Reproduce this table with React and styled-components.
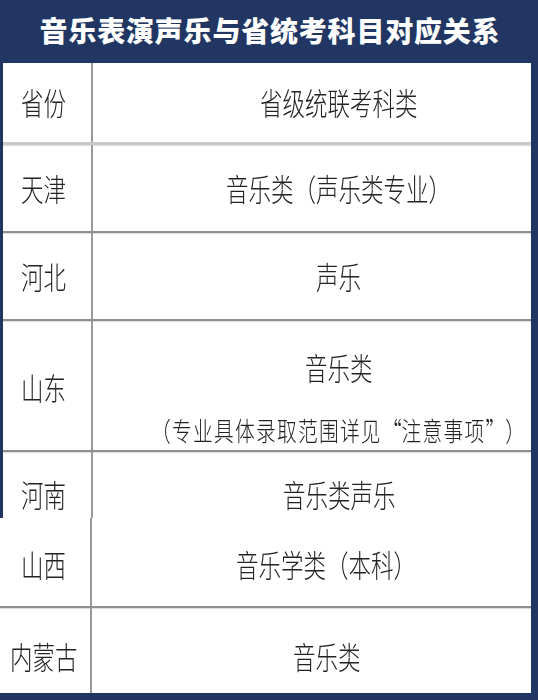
import React from "react";
import styled, { createGlobalStyle } from "styled-components";

const NAVY = "#213663";

const Global = createGlobalStyle`
  html, body { margin: 0; padding: 0; background: #fff; }
  body { font-family: "Noto Sans CJK SC", sans-serif; }
  * { box-sizing: border-box; }
`;

const Frame = styled.div`
  width: 538px;
  height: 700px;
  background: ${NAVY};
  display: flex;
  flex-direction: column;
  padding-bottom: 7px;
`;

const TitleBar = styled.div`
  height: 63px;
  display: flex;
  align-items: center;
  justify-content: center;
  padding-left: 2px;
  padding-bottom: 3px;
`;

const Title = styled.h1`
  margin: 0;
  color: #fff;
  font-family: "Noto Sans CJK SC", sans-serif;
  font-weight: 900;
  font-size: 28px;
  letter-spacing: 0.8px;
  line-height: 1;
`;

const Table = styled.div`
  background: #fff;
  margin-left: ${(p) => p.$inset}px;
  margin-right: 7px;
  display: flex;
  flex-direction: column;
`;

const Row = styled.div`
  display: grid;
  grid-template-columns: ${(p) => p.$left}px 1fr;
  height: ${(p) => p.$h}px;
  border-bottom: ${(p) =>
    p.$line === "light"
      ? "3px solid #c9c9c9"
      : p.$line === "none"
      ? "0"
      : "2px solid #8f8f8f"};
  box-shadow: ${(p) =>
    p.$line === "none" ? "none" : "0 1px 1px rgba(0,0,0,0.12)"};
`;

const LeftCell = styled.div`
  border-right: 2px solid #9a9a9a;
  display: flex;
  align-items: center;
  justify-content: center;
  padding-right: ${(p) => p.$pr ?? 6}px;
  padding-top: ${(p) => p.$pt ?? 0}px;
`;

const RightCell = styled.div`
  display: flex;
  flex-direction: column;
  align-items: center;
  justify-content: center;
  padding-left: ${(p) => p.$pl}px;
  padding-top: ${(p) => p.$pt ?? 0}px;
  gap: ${(p) => p.$gap ?? 0}px;
`;

const CellText = styled.span`
  display: inline-block;
  font-family: "Noto Sans CJK SC", sans-serif;
  font-weight: 300;
  font-size: ${(p) => p.$size ?? 22.5}px;
  letter-spacing: ${(p) => p.$ls ?? 0}px;
  line-height: 1;
  color: #232323;
  white-space: nowrap;
  transform: scaleY(1.35);
  will-change: transform;
`;

const Quote = styled.span`
  display: inline-block;
  width: 1em;
  text-align: ${(p) => (p.$open ? "right" : "left")};
`;

export default function App() {
  return (
    <>
      <Global />
      <Frame>
        <TitleBar>
          <Title>音乐表演声乐与省统考科目对应关系</Title>
        </TitleBar>

        <Table $inset={3}>
          <Row $left={90} $h={82} $line="light">
            <LeftCell>
              <CellText>省份</CellText>
            </LeftCell>
            <RightCell $pl={54}>
              <CellText>省级统联考科类</CellText>
            </RightCell>
          </Row>
          <Row $left={90} $h={88}>
            <LeftCell>
              <CellText>天津</CellText>
            </LeftCell>
            <RightCell $pl={54}>
              <CellText>音乐类（声乐类专业）</CellText>
            </RightCell>
          </Row>
          <Row $left={90} $h={88}>
            <LeftCell>
              <CellText>河北</CellText>
            </LeftCell>
            <RightCell $pl={54}>
              <CellText>声乐</CellText>
            </RightCell>
          </Row>
          <Row $left={90} $h={131}>
            <LeftCell $pt={4}>
              <CellText>山东</CellText>
            </LeftCell>
            <RightCell $pl={54} $gap={42} $pt={25}>
              <CellText>音乐类</CellText>
              <CellText $size={19.7} $ls={1.3}>
                （专业具体录取范围详见<Quote $open>“</Quote>注意事项<Quote>”</Quote>）
              </CellText>
            </RightCell>
          </Row>
          <Row $left={90} $h={66} $line="none">
            <LeftCell $pt={18}>
              <CellText>河南</CellText>
            </LeftCell>
            <RightCell $pl={54} $pt={18}>
              <CellText>音乐类声乐</CellText>
            </RightCell>
          </Row>
        </Table>

        <Table $inset={0}>
          <Row $left={92} $h={90}>
            <LeftCell $pr={2} $pt={4}>
              <CellText>山西</CellText>
            </LeftCell>
            <RightCell $pl={30} $pt={4}>
              <CellText>音乐学类（本科）</CellText>
            </RightCell>
          </Row>
          <Row $left={92} $h={85} $line="none">
            <LeftCell $pr={2} $pt={12}>
              <CellText>内蒙古</CellText>
            </LeftCell>
            <RightCell $pl={30} $pt={12}>
              <CellText>音乐类</CellText>
            </RightCell>
          </Row>
        </Table>
      </Frame>
    </>
  );
}
